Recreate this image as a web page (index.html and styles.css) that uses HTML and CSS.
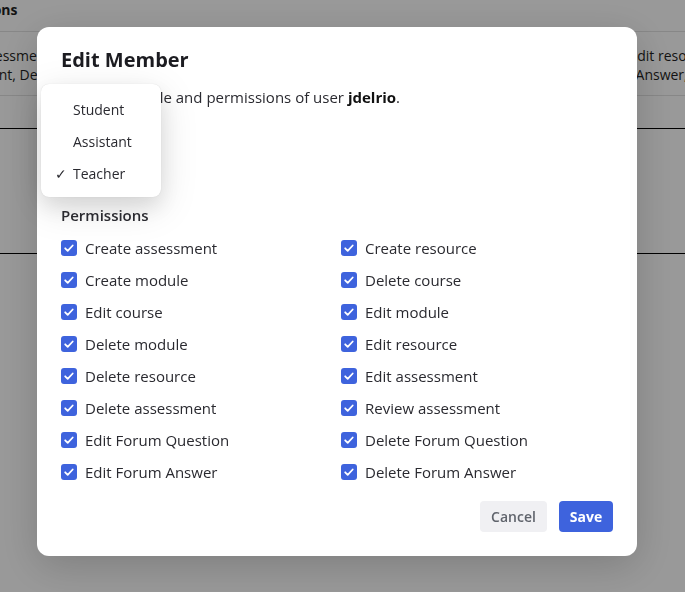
FILE: index.html
```html
<!DOCTYPE html>
<html>
<head>
<meta charset="utf-8">
<link rel="stylesheet" href="styles.css">
</head>
<body>
<div class="page">
  <div class="table">
    <div class="thead"><span class="th">Permissions</span></div>
    <div class="trow">
      <div class="cell cell-left">
        <div class="line-a">Create assessment, Create module</div>
        <div class="line-b">Edit assessment, Delete module</div>
      </div>
      <div class="cell cell-right">
        <div class="line-c">Create resource, Edit resource</div>
        <div class="line-d">Forum Answer, Delete Forum Answer</div>
      </div>
    </div>
    <div class="spacer"></div>
    <div class="rule"></div>
    <div class="block"></div>
    <div class="rule"></div>
  </div>
</div>

<div class="overlay"></div>

<div class="modal">
  <h2 class="title">Edit Member</h2>
  <p class="subtitle">Change the role and permissions of user <b>jdelrio</b>.</p>
  <div class="role">
    <div class="role-label">Role</div>
    <div class="role-select">Teacher</div>
  </div>
  <div class="perm-label">Permissions</div>
  <div class="perms">
    <label class="perm"><span class="box"><svg viewBox="0 0 16 16" width="16" height="16"><path d="M4.2 8.3l2.5 2.5 5-5.3" fill="none" stroke="#fff" stroke-width="1.8" stroke-linecap="round" stroke-linejoin="round"/></svg></span>Create assessment</label>
    <label class="perm"><span class="box"><svg viewBox="0 0 16 16" width="16" height="16"><path d="M4.2 8.3l2.5 2.5 5-5.3" fill="none" stroke="#fff" stroke-width="1.8" stroke-linecap="round" stroke-linejoin="round"/></svg></span>Create resource</label>
    <label class="perm"><span class="box"><svg viewBox="0 0 16 16" width="16" height="16"><path d="M4.2 8.3l2.5 2.5 5-5.3" fill="none" stroke="#fff" stroke-width="1.8" stroke-linecap="round" stroke-linejoin="round"/></svg></span>Create module</label>
    <label class="perm"><span class="box"><svg viewBox="0 0 16 16" width="16" height="16"><path d="M4.2 8.3l2.5 2.5 5-5.3" fill="none" stroke="#fff" stroke-width="1.8" stroke-linecap="round" stroke-linejoin="round"/></svg></span>Delete course</label>
    <label class="perm"><span class="box"><svg viewBox="0 0 16 16" width="16" height="16"><path d="M4.2 8.3l2.5 2.5 5-5.3" fill="none" stroke="#fff" stroke-width="1.8" stroke-linecap="round" stroke-linejoin="round"/></svg></span>Edit course</label>
    <label class="perm"><span class="box"><svg viewBox="0 0 16 16" width="16" height="16"><path d="M4.2 8.3l2.5 2.5 5-5.3" fill="none" stroke="#fff" stroke-width="1.8" stroke-linecap="round" stroke-linejoin="round"/></svg></span>Edit module</label>
    <label class="perm"><span class="box"><svg viewBox="0 0 16 16" width="16" height="16"><path d="M4.2 8.3l2.5 2.5 5-5.3" fill="none" stroke="#fff" stroke-width="1.8" stroke-linecap="round" stroke-linejoin="round"/></svg></span>Delete module</label>
    <label class="perm"><span class="box"><svg viewBox="0 0 16 16" width="16" height="16"><path d="M4.2 8.3l2.5 2.5 5-5.3" fill="none" stroke="#fff" stroke-width="1.8" stroke-linecap="round" stroke-linejoin="round"/></svg></span>Edit resource</label>
    <label class="perm"><span class="box"><svg viewBox="0 0 16 16" width="16" height="16"><path d="M4.2 8.3l2.5 2.5 5-5.3" fill="none" stroke="#fff" stroke-width="1.8" stroke-linecap="round" stroke-linejoin="round"/></svg></span>Delete resource</label>
    <label class="perm"><span class="box"><svg viewBox="0 0 16 16" width="16" height="16"><path d="M4.2 8.3l2.5 2.5 5-5.3" fill="none" stroke="#fff" stroke-width="1.8" stroke-linecap="round" stroke-linejoin="round"/></svg></span>Edit assessment</label>
    <label class="perm"><span class="box"><svg viewBox="0 0 16 16" width="16" height="16"><path d="M4.2 8.3l2.5 2.5 5-5.3" fill="none" stroke="#fff" stroke-width="1.8" stroke-linecap="round" stroke-linejoin="round"/></svg></span>Delete assessment</label>
    <label class="perm"><span class="box"><svg viewBox="0 0 16 16" width="16" height="16"><path d="M4.2 8.3l2.5 2.5 5-5.3" fill="none" stroke="#fff" stroke-width="1.8" stroke-linecap="round" stroke-linejoin="round"/></svg></span>Review assessment</label>
    <label class="perm"><span class="box"><svg viewBox="0 0 16 16" width="16" height="16"><path d="M4.2 8.3l2.5 2.5 5-5.3" fill="none" stroke="#fff" stroke-width="1.8" stroke-linecap="round" stroke-linejoin="round"/></svg></span>Edit Forum Question</label>
    <label class="perm"><span class="box"><svg viewBox="0 0 16 16" width="16" height="16"><path d="M4.2 8.3l2.5 2.5 5-5.3" fill="none" stroke="#fff" stroke-width="1.8" stroke-linecap="round" stroke-linejoin="round"/></svg></span>Delete Forum Question</label>
    <label class="perm"><span class="box"><svg viewBox="0 0 16 16" width="16" height="16"><path d="M4.2 8.3l2.5 2.5 5-5.3" fill="none" stroke="#fff" stroke-width="1.8" stroke-linecap="round" stroke-linejoin="round"/></svg></span>Edit Forum Answer</label>
    <label class="perm"><span class="box"><svg viewBox="0 0 16 16" width="16" height="16"><path d="M4.2 8.3l2.5 2.5 5-5.3" fill="none" stroke="#fff" stroke-width="1.8" stroke-linecap="round" stroke-linejoin="round"/></svg></span>Delete Forum Answer</label>
  </div>
  <div class="actions">
    <button class="btn btn-cancel">Cancel</button>
    <button class="btn btn-save">Save</button>
  </div>
</div>

<div class="menu">
  <div class="menu-item">Student</div>
  <div class="menu-item">Assistant</div>
  <div class="menu-item selected"><span class="check">✓</span>Teacher</div>
</div>
</body>
</html>
```

FILE: styles.css
```css
* { box-sizing: border-box; }
html, body { margin: 0; padding: 0; }
body {
  font-family: "Open Sans", "Noto Sans", sans-serif;
  color: #1f1f23;
  background: #fff;
  width: 685px;
  height: 592px;
  overflow: hidden;
}
.page { width: 685px; height: 592px; overflow: hidden; }
.table { width: 685px; }
.thead {
  height: 32px;
  border-bottom: 1px solid #e2e2e2;
  display: flex;
  align-items: flex-start;
  margin-left: -67px;
}
.th { font-weight: 700; font-size: 14px; line-height: 20px; }
.trow {
  position: relative;
  height: 64px;
  border-bottom: 1px solid #e2e2e2;
  font-size: 14px;
  line-height: 19px;
  padding-top: 14px;
  overflow: hidden;
}
.cell { white-space: nowrap; }
.line-a { margin-left: -73px; }
.line-b { margin-left: -93px; }
.cell-right { position: absolute; left: 619px; top: 14px; }
.line-c { margin-left: -101px; }
.line-d { margin-left: -30px; }
.spacer { height: 32px; }
.rule { height: 1px; background: #000; }
.block { height: 124px; }

.overlay {
  position: fixed;
  inset: 0;
  background: rgba(0, 0, 0, 0.4);
}

.modal {
  position: fixed;
  left: 37px;
  top: 27px;
  width: 600px;
  height: 529px;
  background: #fff;
  border-radius: 12px;
  padding: 21px 24px 24px;
  box-shadow: 0 10px 40px rgba(0,0,0,0.18);
  display: flex;
  flex-direction: column;
}
.title {
  margin: 0;
  font-size: 20px;
  line-height: 24px;
  font-weight: 700;
  color: #1c1c21;
}
.subtitle {
  margin: 14px 0 0;
  font-size: 15px;
  line-height: 22px;
  color: #2a2a30;
}
.subtitle b { color: #111; }
.role { height: 98px; padding-top: 22px; }
.role-label { font-size: 14px; font-weight: 600; line-height: 20px; color: #fff; }
.role-select { margin-top: 8px; width: 90px; height: 30px; color: #fff; font-size: 14px; }
.perm-label {
  font-size: 15px;
  font-weight: 600;
  line-height: 20px;
  color: #2d2d33;
}
.perms {
  margin-top: 7px;
  display: grid;
  grid-template-columns: 280px 272px;
  grid-auto-rows: 32px;
}
.perm {
  display: flex;
  align-items: center;
  gap: 8px;
  font-size: 15px;
  color: #2a2a30;
}
.box {
  width: 16px;
  height: 16px;
  border-radius: 3px;
  background: #3e63dd;
  display: flex;
}
.actions {
  margin-top: 13px;
  display: flex;
  justify-content: flex-end;
  gap: 12px;
}
.btn {
  height: 31px;
  border: none;
  border-radius: 4px;
  font-family: inherit;
  font-size: 14px;
  font-weight: 600;
  padding: 0;
}
.btn-cancel { width: 67px; background: #f0f0f3; color: #60646c; }
.btn-save { width: 54px; background: #3e63dd; color: #fff; font-weight: 700; }

.menu {
  position: fixed;
  left: 41px;
  top: 84px;
  width: 120px;
  height: 113px;
  background: #fff;
  border-radius: 8px;
  padding-top: 10px;
  box-shadow: 0 0 1px rgba(0,0,0,0.15), 0 10px 38px rgba(0,0,0,0.13), 0 10px 20px rgba(0,0,0,0.08);
}
.menu-item {
  position: relative;
  height: 32px;
  line-height: 32px;
  padding-left: 32px;
  font-size: 14px;
  color: #2a2a30;
}
.check {
  position: absolute;
  left: 14px;
  top: 0;
  font-size: 14px;
}
```
